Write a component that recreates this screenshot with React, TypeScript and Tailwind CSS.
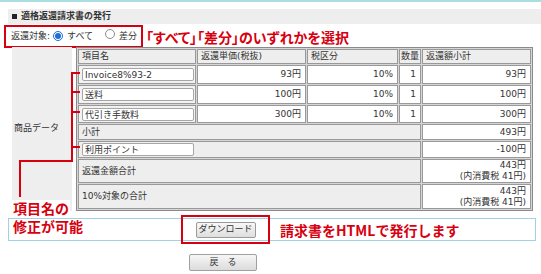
import React from 'react';

interface Item {
  name: string;
  price: string;
  tax: string;
  qty: string;
  sub: string;
}

const items: Item[] = [
  { name: 'Invoice8%93-2', price: '93円', tax: '10%', qty: '1', sub: '93円' },
  { name: '送料', price: '100円', tax: '10%', qty: '1', sub: '100円' },
  { name: '代引き手数料', price: '300円', tax: '10%', qty: '1', sub: '300円' },
];

const Radio = ({ checked }: { checked: boolean }) => (
  <span
    className={`inline-flex items-center justify-center w-[10px] h-[10px] rounded-full border bg-white ${
      checked ? 'border-[#1a6fd8]' : 'border-[#8c8c8c]'
    }`}
  >
    {checked && <span className="w-[6px] h-[6px] rounded-full bg-[#1a6fd8]" />}
  </span>
);

const NameInput = ({ value }: { value: string }) => (
  <input
    readOnly
    defaultValue={value}
    className="block w-[112px] h-[13px] border border-[#a6a6a6] rounded-[2px] bg-white px-[2px] text-[9px] text-[#333] outline-none"
  />
);

export default function App() {
  return (
    <div className="relative w-[541px] h-[274px] overflow-hidden bg-white text-[#333] font-['DejaVu_Sans','Noto_Sans_CJK_JP',sans-serif]">
      <div className="h-[2px] bg-[#a9dfe2]" />

      {/* section title */}
      <div className="mt-[7px] ml-[8px] h-[15px] bg-[#eeeeee] flex items-center gap-[4px] pl-[4px] text-[9px] font-bold">
        <span className="w-[5px] h-[5px] bg-[#222]" />
        <span>適格返還請求書の発行</span>
      </div>

      {/* target select */}
      <div className="flex items-center mt-px">
        <div className="ml-[4px] w-[139px] h-[23px] border-2 border-[#d7000f] flex items-center pl-[5px] text-[9px]">
          <span>返還対象:</span>
          <span className="ml-[3px]"><Radio checked /></span>
          <span className="ml-[4px]">すべて</span>
          <span className="ml-[12px]"><Radio checked={false} /></span>
          <span className="ml-[4px]">差分</span>
        </div>
        <span className="ml-[3px] text-[14px] leading-none font-bold text-[#d7000f] [font-feature-settings:'palt'] font-['Noto_Sans_CJK_JP',sans-serif]">
          「すべて」「差分」のいずれかを選択
        </span>
      </div>

      {/* product data */}
      <div className="flex ml-[12px] -mt-px">
        <div className="w-[60px] bg-[#eeeeee] flex items-center pl-[2px] text-[9px]">商品データ</div>
        <div className="ml-[4px]">
          <table className="table-fixed border-separate border-spacing-[1px] border border-[#8a8a8a] bg-[#d6d6d6] text-[9px] leading-[11px] whitespace-nowrap">
            <colgroup>
              <col className="w-[118px]" />
              <col className="w-[109px]" />
              <col className="w-[91px]" />
              <col className="w-[22px]" />
              <col className="w-[109px]" />
            </colgroup>
            <tbody>
              <tr>
                <th className="h-[15px] border border-[#999] bg-[#eeeeee] text-left font-normal pl-[3px]">項目名</th>
                <th className="border border-[#999] bg-[#eeeeee] text-left font-normal pl-[3px]">返還単価(税抜)</th>
                <th className="border border-[#999] bg-[#eeeeee] text-left font-normal pl-[3px]">税区分</th>
                <th className="border border-[#999] bg-[#eeeeee] text-left font-normal pl-[1px]">数量</th>
                <th className="border border-[#999] bg-[#eeeeee] text-left font-normal pl-[3px]">返還額小計</th>
              </tr>
              {items.map((it, i) => (
                <tr key={it.name}>
                  <td className={`${i === 2 ? 'h-[18px]' : 'h-[19px]'} border border-[#999] bg-[#f2f2f2] pl-[3px]`}>
                    <NameInput value={it.name} />
                  </td>
                  <td className="border border-[#999] bg-white text-right pr-[4px]">{it.price}</td>
                  <td className="border border-[#999] bg-white text-right pr-[4px]">{it.tax}</td>
                  <td className="border border-[#999] bg-white text-right pr-[4px]">{it.qty}</td>
                  <td className="border border-[#999] bg-white text-right pr-[4px]">{it.sub}</td>
                </tr>
              ))}
              <tr>
                <td colSpan={4} className="h-[16px] border border-[#999] bg-[#eeeeee] pl-[3px]">小計</td>
                <td className="border border-[#999] bg-white text-right pr-[4px]">493円</td>
              </tr>
              <tr>
                <td colSpan={4} className="h-[17px] border border-[#999] bg-[#eeeeee] pl-[3px]">
                  <NameInput value="利用ポイント" />
                </td>
                <td className="border border-[#999] bg-white text-right pr-[4px]">-100円</td>
              </tr>
              <tr>
                <td colSpan={4} className="h-[24px] border border-[#999] bg-[#eeeeee] pl-[3px]">返還金額合計</td>
                <td className="border border-[#999] bg-white text-right pr-[4px]">
                  443円<br />(内消費税 41円)
                </td>
              </tr>
              <tr>
                <td colSpan={4} className="h-[25px] border border-[#999] bg-[#eeeeee] pl-[3px]">10%対象の合計</td>
                <td className="border border-[#999] bg-white text-right pr-[4px]">
                  443円<br />(内消費税 41円)
                </td>
              </tr>
            </tbody>
          </table>
        </div>
      </div>

      {/* download */}
      <div className="mt-[7px] ml-[8px] w-[528px] h-[23px] border border-[#9fd3e3] flex items-center">
        <div className="ml-[172px] w-[89px] h-[29px] border-2 border-[#d7000f] flex items-center justify-center">
          <button className="w-[60px] h-[16px] border border-[#9a9a9a] rounded-[2px] bg-gradient-to-b from-[#f8f8f8] to-[#dedede] text-[9px] text-[#333] leading-none">
            ダウンロード
          </button>
        </div>
        <span className="ml-[10px] text-[14px] leading-none font-bold text-[#d7000f] font-['Noto_Sans_CJK_JP',sans-serif]">
          請求書をHTMLで発行します
        </span>
      </div>

      <button className="block mt-[13px] ml-[189px] w-[68px] h-[17px] border border-[#a0a0a0] rounded-[2px] bg-gradient-to-b from-[#f6f6f6] to-[#dcdcdc] text-[9px] text-[#333] leading-none">
        戻　る
      </button>

      {/* annotation: item names editable */}
      <svg className="absolute left-0 top-0 pointer-events-none" width="541" height="274">
        <g stroke="#d7000f" strokeWidth="2" fill="none">
          <path d="M72 72 V161" />
          <path d="M72 73 H80" />
          <path d="M72 92 H80" />
          <path d="M72 112 H80" />
          <path d="M72 147 H80" />
          <path d="M73 161 H20 V197" />
        </g>
      </svg>
      <div className="absolute left-[12px] top-[200px] bg-white px-[1px] text-[14px] leading-[17px] font-bold text-[#d7000f] font-['Noto_Sans_CJK_JP',sans-serif]">
        項目名の
      </div>
      <div className="absolute left-[12px] top-[218px] px-[1px] text-[14px] leading-[17px] font-bold text-[#d7000f] font-['Noto_Sans_CJK_JP',sans-serif]">
        修正が可能
      </div>
    </div>
  );
}
